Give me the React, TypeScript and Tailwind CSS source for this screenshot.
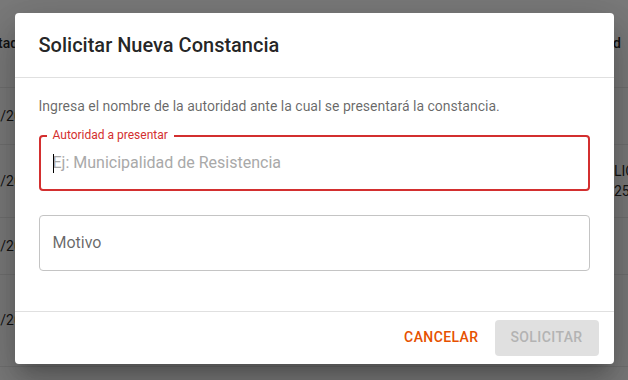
import React from 'react';

interface Row {
  date: string;
  height: string;
  right?: string[];
}

const rows: Row[] = [
  { date: '05/12/2025', height: 'h-[57px]' },
  { date: '05/12/2025', height: 'h-[73px]', right: ['LICENCIA', '25/11/2025'] },
  { date: '05/12/2025', height: 'h-[57px]' },
  { date: '05/12/2025', height: 'h-[92px]' },
];

const App: React.FC = () => {
  return (
    <div className="relative w-full h-[380px] overflow-hidden bg-[#f5f5f5] font-['Roboto',sans-serif] text-[14px] text-black/87">
      {/* Table behind the dialog */}
      <div className="flex flex-col">
        <div className="flex h-[88px] items-center justify-between border-b border-[#e0e0e0] font-medium">
          <span className="-ml-[17px] whitespace-nowrap">Estado</span>
          <span className="mr-[7px] whitespace-nowrap">Autoridad</span>
        </div>
        {rows.map((r, i) => (
          <div key={i} className={`flex ${r.height} items-center justify-between border-b border-[#e0e0e0]`}>
            <span className="-ml-[37px] whitespace-nowrap">{r.date}</span>
            {r.right && (
              <div className="w-[14px] flex flex-col leading-5 whitespace-nowrap">
                {r.right.map((t) => (
                  <span key={t}>{t}</span>
                ))}
              </div>
            )}
          </div>
        ))}
      </div>

      {/* Backdrop + dialog */}
      <div className="absolute inset-0 flex items-center justify-center bg-black/50">
        <div className="w-[599px] -mt-[4px] bg-white rounded shadow-[0_11px_15px_-7px_rgba(0,0,0,0.2),0_24px_38px_3px_rgba(0,0,0,0.14),0_9px_46px_8px_rgba(0,0,0,0.12)]">
          <div className="px-6 py-4 text-[20px] leading-8 font-medium text-black/87">
            Solicitar Nueva Constancia
          </div>

          <div className="border-y border-[#e0e0e0] px-6 pt-4 pb-10">
            <p className="text-[14px] leading-6 text-black/60">
              Ingresa el nombre de la autoridad ante la cual se presentará la constancia.
            </p>

            <div className="relative mt-[17px] h-14 rounded border-2 border-[#d32f2f] flex items-center pl-[12px]">
              <span className="absolute -top-[9px] left-[6px] bg-white px-[6px] text-[12px] leading-[14px] text-[#d32f2f]">
                Autoridad a presentar
              </span>
              <span className="text-[16px] text-[#a9a9a9]">Ej: Municipalidad de Resistencia</span>
              <span className="absolute left-[12px] top-[17px] h-[19px] w-px bg-black" />
            </div>

            <div className="mt-6 h-14 rounded border border-[#c4c4c4] flex items-center pl-[13px] text-[16px] text-black/60">
              Motivo
            </div>
          </div>

          <div className="flex items-center justify-end gap-2 py-2 pr-[15px]">
            <button className="h-9 px-2 rounded text-[14px] font-medium uppercase tracking-[0.4px] text-[#e65100]">
              Cancelar
            </button>
            <button className="h-9 w-[104px] rounded bg-[#e0e0e0] text-[14px] font-medium uppercase tracking-[0.4px] text-[#b3b3b3]">
              Solicitar
            </button>
          </div>
        </div>
      </div>
    </div>
  );
};

export default App;
